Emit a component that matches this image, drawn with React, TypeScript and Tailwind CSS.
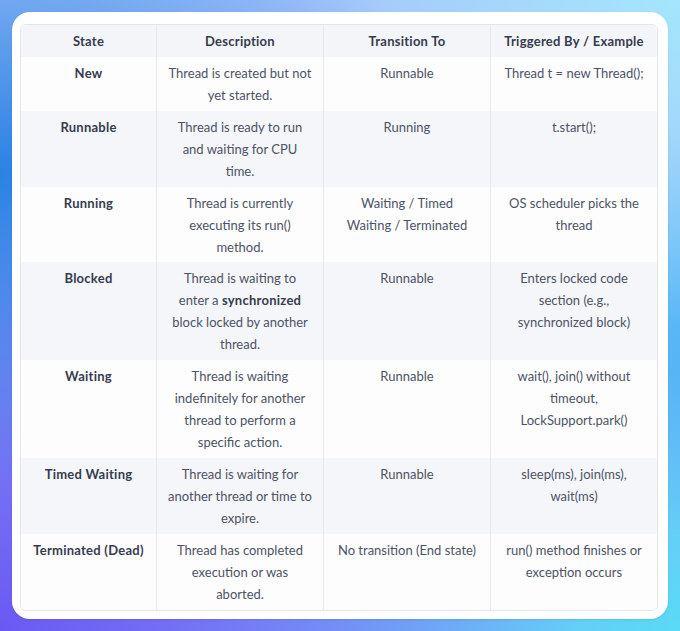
import React from "react";

type Row = {
  state: string;
  desc: React.ReactNode[];
  to: string[];
  trig: string[];
};

const rows: Row[] = [
  {
    state: "New",
    desc: ["Thread is created but not", "yet started."],
    to: ["Runnable"],
    trig: ["Thread t = new Thread();"],
  },
  {
    state: "Runnable",
    desc: ["Thread is ready to run", "and waiting for CPU", "time."],
    to: ["Running"],
    trig: ["t.start();"],
  },
  {
    state: "Running",
    desc: ["Thread is currently", "executing its run()", "method."],
    to: ["Waiting / Timed", "Waiting / Terminated"],
    trig: ["OS scheduler picks the", "thread"],
  },
  {
    state: "Blocked",
    desc: [
      "Thread is waiting to",
      <>
        enter a{" "}
        <strong className="font-bold text-[#363c4e] tracking-[0.25px]">synchronized</strong>
      </>,
      "block locked by another",
      "thread.",
    ],
    to: ["Runnable"],
    trig: ["Enters locked code", "section (e.g.,", "synchronized block)"],
  },
  {
    state: "Waiting",
    desc: [
      "Thread is waiting",
      "indefinitely for another",
      "thread to perform a",
      "specific action.",
    ],
    to: ["Runnable"],
    trig: ["wait(), join() without", "timeout,", "LockSupport.park()"],
  },
  {
    state: "Timed Waiting",
    desc: ["Thread is waiting for", "another thread or time to", "expire."],
    to: ["Runnable"],
    trig: ["sleep(ms), join(ms),", "wait(ms)"],
  },
  {
    state: "Terminated (Dead)",
    desc: ["Thread has completed", "execution or was", "aborted."],
    to: ["No transition (End state)"],
    trig: ["run() method finishes or", "exception occurs"],
  },
];

function Lines({ items }: { items: React.ReactNode[] }) {
  return (
    <>
      {items.map((l, i) => (
        <div key={i} className="whitespace-nowrap">
          {l}
        </div>
      ))}
    </>
  );
}

export default function App() {
  return (
    <div
      className="w-[680px] h-[631px] p-3 bg-[radial-gradient(ellipse_at_0%_28%,#2a83e3_0%,transparent_48%),radial-gradient(ellipse_at_0%_100%,#6a5af3_0%,transparent_60%),radial-gradient(ellipse_at_100%_0%,#a4e6fb_0%,transparent_42%),radial-gradient(ellipse_at_100%_52%,#4db0f5_0%,transparent_45%),radial-gradient(ellipse_at_100%_100%,#5adaf6_0%,transparent_55%),linear-gradient(to_bottom,#a6c3fa,#8aa0f7)]"
      style={{ fontFamily: "Lato, 'Open Sans', sans-serif" }}
    >
      <div className="h-full bg-white rounded-[18px] pt-3 pl-2 pr-[10px] shadow-[0_1px_3px_rgba(0,0,0,0.08)]">
        <div className="border border-[#e4e6eb] rounded-md overflow-hidden text-[13px] leading-[22px] text-[#4d5364] text-center">
          <div className="flex bg-[#f4f5f9] font-bold text-[#363c4e] tracking-[0.25px]">
            <div className="w-[135px] pt-[5px] pb-[5px]">State</div>
            <div className="w-[167px] border-l border-[#e6e8ed] pt-[5px] pb-[5px]">Description</div>
            <div className="w-[167px] border-l border-[#e6e8ed] pt-[5px] pb-[5px]">Transition To</div>
            <div className="flex-1 border-l border-[#e6e8ed] pt-[5px] pb-[5px]">Triggered By / Example</div>
          </div>
          {rows.map((r, i) => (
            <div
              key={r.state}
              className={`flex ${i % 2 === 1 ? "bg-[#f5f6fa]" : "bg-[#fdfdfe]"}`}
            >
              <div className="w-[135px] pt-[5px] pb-[4.8px] font-bold text-[#363c4e] tracking-[0.25px] whitespace-nowrap">
                {r.state}
              </div>
              <div className="w-[167px] border-l border-[#e6e8ed] pt-[5px] pb-[4.8px]">
                <Lines items={r.desc} />
              </div>
              <div className="w-[167px] border-l border-[#e6e8ed] pt-[5px] pb-[4.8px]">
                <Lines items={r.to} />
              </div>
              <div className="flex-1 border-l border-[#e6e8ed] pt-[5px] pb-[4.8px]">
                <Lines items={r.trig} />
              </div>
            </div>
          ))}
        </div>
      </div>
    </div>
  );
}
